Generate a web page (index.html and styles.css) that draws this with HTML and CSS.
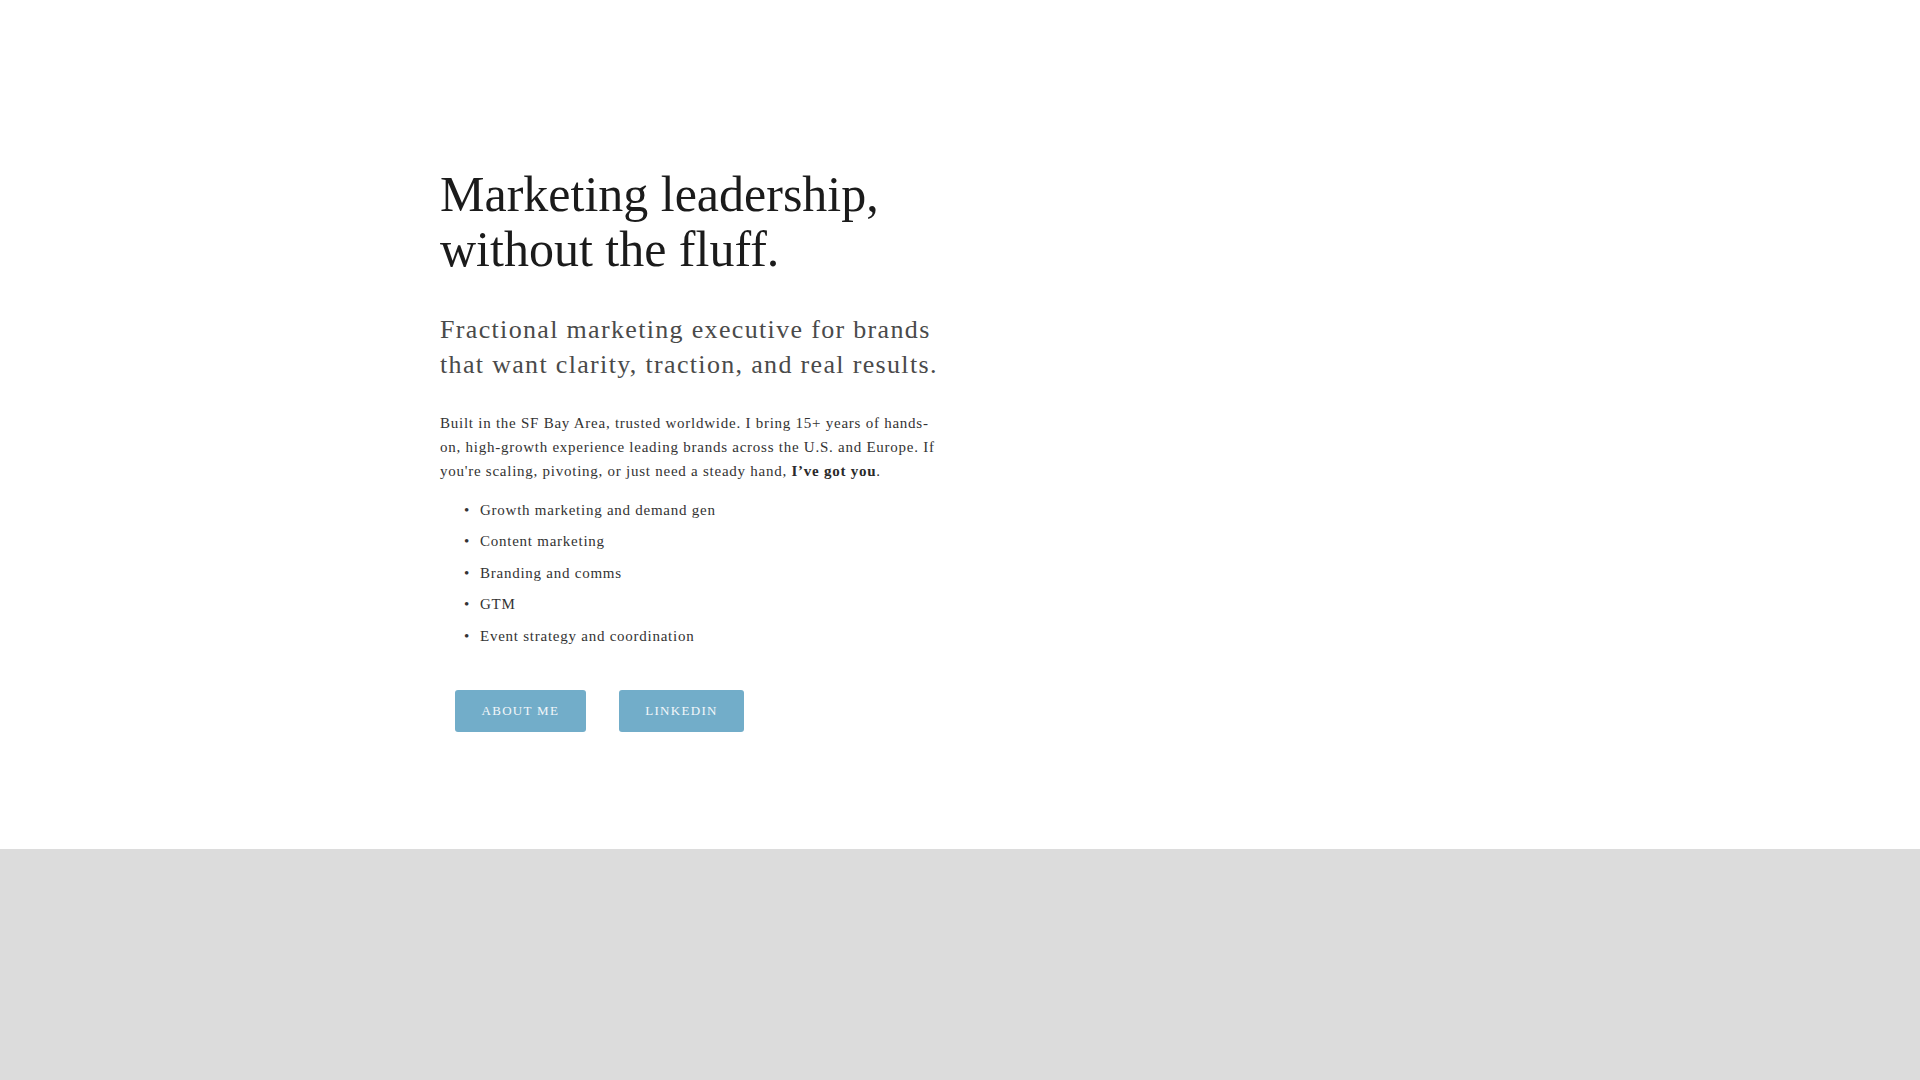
FILE: index.html
```html
<!DOCTYPE html>
<html lang="en">
<head>
<meta charset="utf-8">
<title>Marketing leadership, without the fluff.</title>
<link rel="stylesheet" href="styles.css">
</head>
<body>
<main class="hero">
  <div class="hero-inner">
    <div class="hero-text">
      <h1 class="hero-title">Marketing leadership, without the fluff.</h1>
      <p class="hero-subtitle">Fractional marketing executive for brands that want clarity, traction, and real results.</p>
      <p class="hero-intro">Built in the SF Bay Area, trusted worldwide. I bring 15+ years of hands-on, high-growth experience leading brands across the U.S. and Europe. If you're scaling, pivoting, or just need a steady hand, <strong>I’ve got you</strong>.</p>
      <ul class="hero-list">
        <li>Growth marketing and demand gen</li>
        <li>Content marketing</li>
        <li>Branding and comms</li>
        <li>GTM</li>
        <li>Event strategy and coordination</li>
      </ul>
      <div class="hero-actions">
        <a class="btn" href="#">About Me</a>
        <a class="btn" href="#">LinkedIn</a>
      </div>
    </div>
    <div class="hero-media"></div>
  </div>
</main>
<section class="band"></section>
</body>
</html>
```

FILE: styles.css
```css
html, body {
  margin: 0;
  padding: 0;
  background: #ffffff;
}

body {
  font-family: "Liberation Serif", "Times New Roman", serif;
  color: #333333;
}

.hero {
  box-sizing: border-box;
  height: 849px;
  padding-top: 167px;
  background: #ffffff;
}

.hero-inner {
  width: 1040px;
  margin: 0 auto;
  display: grid;
  grid-template-columns: 502px 1fr;
}

.hero-title {
  margin: 0;
  font-size: 50px;
  line-height: 55px;
  font-weight: 400;
  color: #1b1b1b;
}

.hero-subtitle {
  margin: 35px 0 0;
  font-size: 26px;
  line-height: 35px;
  letter-spacing: 1.33px;
  color: #4a4a4a;
}

.hero-intro {
  margin: 29px 0 0;
  font-size: 15px;
  line-height: 24px;
  letter-spacing: 0.75px;
  color: #333333;
}

.hero-intro strong {
  font-weight: 700;
  color: #2a2a2a;
}

.hero-list {
  margin: 15px 0 0;
  padding-left: 40px;
  list-style: none;
  font-size: 15px;
  line-height: 24px;
  letter-spacing: 0.75px;
  color: #333333;
}

.hero-list li::before {
  content: "•";
  display: inline-block;
  width: 0;
  margin-left: -16px;
  margin-right: 16px;
}

.hero-list li + li {
  margin-top: 7.4px;
}

.hero-actions {
  display: flex;
  gap: 33px;
  padding-left: 15px;
  margin-top: 42px;
}

.btn {
  display: inline-flex;
  align-items: center;
  height: 42px;
  padding: 0 26.5px;
  background: #72adc9;
  color: #f2f7fa;
  font-size: 13px;
  letter-spacing: 1.3px;
  text-transform: uppercase;
  text-decoration: none;
  border-radius: 3px;
}

.band {
  height: 231px;
  background: #dcdcdc;
}
```
